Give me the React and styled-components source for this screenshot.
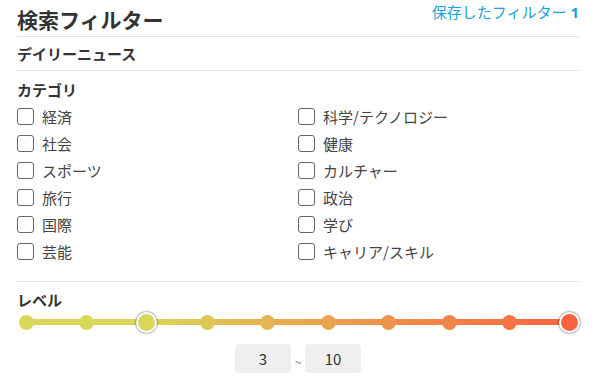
import React from "react";
import styled, { createGlobalStyle } from "styled-components";

const GlobalStyle = createGlobalStyle`
  html, body { margin: 0; padding: 0; background: #fff; }
  body {
    font-family: "Noto Sans CJK JP", "Noto Sans", sans-serif;
    color: #333;
  }
`;

const Page = styled.div`
  width: 562px;
  margin-left: 17px;
`;

const Header = styled.div`
  display: flex;
  justify-content: space-between;
  align-items: center;
  height: 36px;
  border-bottom: 1px solid #e3e3e3;
`;

const Title = styled.h1`
  margin: 0;
  font-size: 21px;
  line-height: 28px;
  font-weight: 700;
  color: #333;
  padding-top: 2px;
`;

const SavedLink = styled.a`
  display: flex;
  align-items: baseline;
  gap: 4px;
  font-size: 15px;
  line-height: 18px;
  color: #1ba1e2;
  text-decoration: none;
  margin-bottom: 13px;
`;

const Count = styled.span`
  font-weight: 700;
  font-family: "Open Sans", "Noto Sans", sans-serif;
  font-size: 15px;
`;

const Section = styled.div`
  padding: ${(p) => p.$pad};
  border-bottom: ${(p) => (p.$noBorder ? "none" : "1px solid #e3e3e3")};
`;

const SectionTitle = styled.div`
  font-size: 15px;
  line-height: 18px;
  font-weight: 700;
  color: #333;
`;

const Grid = styled.div`
  display: grid;
  grid-template-columns: 1fr 1fr;
  grid-auto-rows: 27px;
  margin-top: 4px;
`;

const Option = styled.label`
  display: flex;
  align-items: center;
  gap: 8px;
  font-size: 15px;
  color: #444;
  cursor: pointer;
`;

const Box = styled.span`
  box-sizing: border-box;
  width: 17px;
  height: 17px;
  border: 1px solid #666;
  border-radius: 3px;
  background: #fff;
  flex: none;
`;

const Slider = styled.div`
  position: relative;
  display: flex;
  justify-content: space-between;
  align-items: center;
  height: 20px;
  margin: 3px 1px 0;
`;

const Track = styled.div`
  position: absolute;
  left: 8px;
  right: 8px;
  top: 7px;
  height: 6px;
  background: linear-gradient(
    to right,
    #d9d75a 0%,
    #d9d75a 22.2%,
    #e3b752 40%,
    #f0914a 65%,
    #fb633f 100%
  );
`;

const Cell = styled.div`
  position: relative;
  width: 16px;
  height: 20px;
  display: flex;
  align-items: center;
  justify-content: center;
`;

const Dot = styled.span`
  box-sizing: border-box;
  flex: none;
  width: ${(p) => (p.$active ? "21px" : "15px")};
  height: ${(p) => (p.$active ? "21px" : "15px")};
  border-radius: 50%;
  border: ${(p) => (p.$active ? "2px solid #fff" : "none")};
  box-shadow: ${(p) => (p.$active ? "0 0 2px 0.5px rgba(0,0,0,0.45)" : "none")};
`;

const RangeRow = styled.div`
  display: flex;
  justify-content: center;
  align-items: center;
  gap: 2px;
  margin-top: 12px;
`;

const NumBox = styled.div`
  width: 56px;
  height: 29px;
  border-radius: 4px;
  background: #efefef;
  display: flex;
  align-items: center;
  justify-content: center;
  font-size: 15px;
  color: #333;
`;

const Tilde = styled.span`
  font-size: 12px;
  color: #777;
  width: 10px;
  text-align: center;
  padding-top: 6px;
`;

const left = ["経済", "社会", "スポーツ", "旅行", "国際", "芸能"];
const right = ["科学/テクノロジー", "健康", "カルチャー", "政治", "学び", "キャリア/スキル"];

const start = [217, 215, 90];
const end = [251, 99, 64];
function dotColor(i) {
  if (i < 3) return "rgb(217,215,90)";
  const t = (i - 3) / 7;
  const c = start.map((s, k) => Math.round(s + (end[k] - s) * t));
  return `rgb(${c.join(",")})`;
}

export default function App() {
  const items = [];
  for (let i = 0; i < 6; i++) {
    items.push(left[i], right[i]);
  }
  const levels = Array.from({ length: 10 }, (_, i) => i + 1);
  return (
    <>
      <GlobalStyle />
      <Page>
        <Header>
          <Title>検索フィルター</Title>
          <SavedLink href="#">
            保存したフィルター<Count>1</Count>
          </SavedLink>
        </Header>
        <Section $pad="8px 0 7px">
          <SectionTitle>デイリーニュース</SectionTitle>
        </Section>
        <Section $pad="10px 0 16px">
          <SectionTitle>カテゴリ</SectionTitle>
          <Grid>
            {items.map((label) => (
              <Option key={label}>
                <Box />
                {label}
              </Option>
            ))}
          </Grid>
        </Section>
        <Section $pad="9px 0 0" $noBorder>
          <SectionTitle>レベル</SectionTitle>
          <Slider>
            <Track />
            {levels.map((lv) => (
              <Cell key={lv}>
                <Dot
                  $active={lv === 3 || lv === 10}
                  style={{ background: dotColor(lv) }}
                />
              </Cell>
            ))}
          </Slider>
          <RangeRow>
            <NumBox>3</NumBox>
            <Tilde>~</Tilde>
            <NumBox>10</NumBox>
          </RangeRow>
        </Section>
      </Page>
    </>
  );
}
